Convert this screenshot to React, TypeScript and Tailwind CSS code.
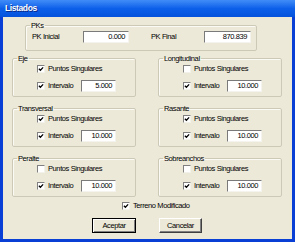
import React from "react";

const txt = "text-[7.5px] leading-none tracking-[-0.4px]";

// small XP style checkbox
const Check = ({ checked }: { checked: boolean }) => (
  <span className="flex h-[8px] w-[8px] shrink-0 items-center justify-center border border-t-[#808080] border-l-[#808080] border-b-[#f2f1ea] border-r-[#f2f1ea] bg-white">
    {checked && (
      <svg viewBox="0 0 7 7" className="h-[6px] w-[6px]">
        <path d="M1 3.2 L2.8 5 L6 1.6" fill="none" stroke="#000" strokeWidth="1.5" />
      </svg>
    )}
  </span>
);

const NumField = ({ value, width }: { value: string; width: string }) => (
  <div
    className={`flex h-[12px] ${width} items-center justify-end border border-t-[#7a7a7a] border-l-[#7a7a7a] border-b-[#f4f3ee] border-r-[#f4f3ee] bg-white pr-[3px] ${txt}`}
  >
    {value}
  </div>
);

interface GroupProps {
  title: string;
  puntos: boolean;
  value: string;
}

const Group = ({ title, puntos, value }: GroupProps) => (
  <fieldset className="h-[42px] rounded-[2px] border border-[#cdc9b7] shadow-[inset_1px_1px_0_#fbfaf4]">
    <legend className={`ml-[4px] px-[1px] ${txt} leading-[8px]`}>{title}</legend>
    <div className="flex flex-col gap-[5px] pl-[24px]">
      <div className="flex h-[12px] items-center gap-[3px]">
        <Check checked={puntos} />
        <span className={txt}>Puntos Singulares</span>
      </div>
      <div className="flex h-[12px] items-center gap-[3px]">
        <Check checked />
        <span className={`w-[30px] ${txt}`}>Intervalo</span>
        <NumField value={value} width="w-[35px]" />
      </div>
    </div>
  </fieldset>
);

const groups: GroupProps[] = [
  { title: "Eje", puntos: true, value: "5.000" },
  { title: "Longitudinal", puntos: false, value: "10.000" },
  { title: "Transversal", puntos: true, value: "10.000" },
  { title: "Rasante", puntos: true, value: "10.000" },
  { title: "Peralte", puntos: false, value: "10.000" },
  { title: "Sobreanchos", puntos: false, value: "10.000" },
];

export default function App() {
  return (
    <div className="flex h-[242px] w-[295px] flex-col bg-[#0a3fd6] font-['Liberation_Sans',Arial,sans-serif] text-black">
      {/* title bar */}
      <div className="flex h-[17px] shrink-0 items-center bg-gradient-to-b from-[#3f8cf8] via-[#0c5fe9] to-[#0553dd] pl-[5px]">
        <span className="text-[8.5px] font-bold leading-none tracking-[-0.4px] text-white [text-shadow:1px_1px_0_#0a2a8a]">
          Listados
        </span>
      </div>

      <div className="flex flex-1 px-[3px] pb-[3px]">
        <div className="flex flex-1 flex-col bg-[#ece9d8] pt-[5px]">
          {/* PKs */}
          <fieldset className="ml-[22px] h-[29px] w-[232px] rounded-[2px] border border-[#cdc9b7] shadow-[inset_1px_1px_0_#fbfaf4]">
            <legend className={`ml-[4px] px-[1px] ${txt} leading-[8px]`}>PKs</legend>
            <div className="mt-[1px] flex h-[13px] items-center pl-[6px]">
              <span className={`w-[51px] ${txt}`}>PK Inicial</span>
              <NumField value="0.000" width="w-[46px]" />
              <span className={`ml-[22px] w-[53px] ${txt}`}>PK Final</span>
              <NumField value="870.839" width="w-[47px]" />
            </div>
          </fieldset>

          {/* option groups */}
          <div className="mt-[4px] grid grid-cols-[124px_124px] gap-x-[22px] gap-y-[8px] pl-[9px]">
            {groups.map((g) => (
              <Group key={g.title} {...g} />
            ))}
          </div>

          <div className="mt-[4px] flex h-[10px] items-center gap-[3px] pl-[119px]">
            <Check checked />
            <span className={txt}>Terreno Modificado</span>
          </div>

          <div className="mt-[7px] flex gap-[23px] pl-[89px]">
            <button className={`flex h-[15px] w-[44px] items-center justify-center border border-black bg-[#ece9d8] ${txt} shadow-[inset_1px_1px_0_#ffffff,inset_-1px_-1px_0_#808080]`}>
              Aceptar
            </button>
            <button className={`flex h-[15px] w-[43px] items-center justify-center border border-t-white border-l-white border-b-[#404040] border-r-[#404040] bg-[#ece9d8] ${txt} shadow-[inset_-1px_-1px_0_#808080]`}>
              Cancelar
            </button>
          </div>
        </div>
      </div>
    </div>
  );
}
